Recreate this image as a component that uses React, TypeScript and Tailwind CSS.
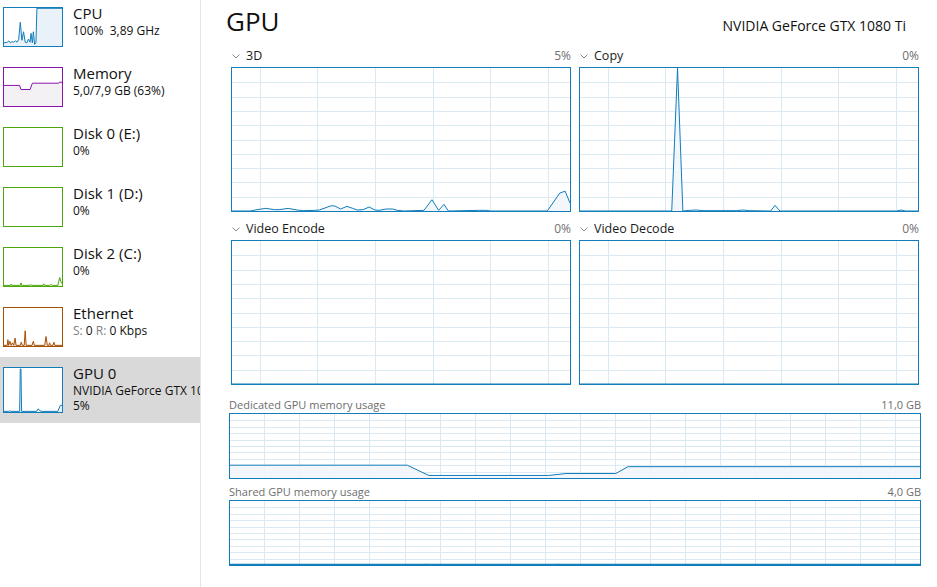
import React from "react";

type Pt = [number, number];

const BLUE = "#117dbb";
const GRID = "#d9eaf4";
const FILL = "#f1f6fa";

function areaPaths(pts: Pt[], w: number, h: number) {
  const xy = pts.map(([xf, vf]) => [xf * w, h - vf * h] as [number, number]);
  const line = xy.map((p, i) => `${i ? "L" : "M"}${p[0].toFixed(2)},${p[1].toFixed(2)}`).join(" ");
  const area = `${line} L${xy[xy.length - 1][0].toFixed(2)},${h} L${xy[0][0].toFixed(2)},${h} Z`;
  return { line, area };
}

function Chart({
  w,
  h,
  vx,
  rows,
  data,
  boxClass,
  thickBottom,
}: {
  w: number;
  h: number;
  vx: number[];
  rows: number;
  data: Pt[];
  boxClass: string;
  thickBottom?: boolean;
}) {
  const iw = w - 2;
  const ih = h - 2;
  const { line, area } = areaPaths(data, iw, ih);
  const hs: number[] = [];
  for (let k = 1; k < rows; k++) hs.push(Math.round((k * ih) / rows) + 0.5);
  return (
    <div className={boxClass}>
      <svg width={iw} height={ih} className="block">
        {vx.map((x, i) => (
          <line key={"v" + i} x1={x} x2={x} y1={0} y2={ih} stroke={GRID} strokeWidth={1} />
        ))}
        {hs.map((y, i) => (
          <line key={"h" + i} x1={0} x2={iw} y1={y} y2={y} stroke={GRID} strokeWidth={1} />
        ))}
        <path d={area} fill={FILL} fillOpacity={0.85} />
        <path d={line} fill="none" stroke={BLUE} strokeWidth={1} strokeLinejoin="round" />
        {thickBottom && <line x1={0} x2={iw} y1={ih - 0.5} y2={ih - 0.5} stroke={BLUE} strokeWidth={1.5} />}
      </svg>
    </div>
  );
}

function Thumb({
  data,
  color,
  fill,
  tall,
  boxClass,
}: {
  data: Pt[];
  color: string;
  fill: string;
  tall?: boolean;
  boxClass: string;
}) {
  const iw = 58;
  const ih = tall ? 44 : 38;
  const { line, area } = data.length ? areaPaths(data, iw, ih) : { line: "", area: "" };
  return (
    <div className={boxClass}>
      <svg width={iw} height={ih} className="block">
        {data.length > 0 && <path d={area} fill={fill} />}
        {data.length > 0 && <path d={line} fill="none" stroke={color} strokeWidth={1} strokeLinejoin="round" />}
      </svg>
    </div>
  );
}

const conv = (pts: number[][], x0: number, x1: number, y0: number, y1: number): Pt[] =>
  pts.map(([x, y]) => [(x - x0) / (x1 - x0), (y1 - y) / (y1 - y0)]);

const cpuData = conv(
  [
    [10, 130], [20, 128], [25, 124], [30, 130], [35, 126], [40, 128], [45, 124], [50, 128], [55, 120],
    [60, 65], [65, 122], [70, 95], [75, 128], [80, 130], [85, 118], [90, 128], [93, 100], [97, 130],
    [100, 95], [104, 135], [108, 130], [111, 21], [188, 21],
  ],
  10, 188, 20, 140
);
const memData = conv(
  [[10, 255], [58, 255], [62, 268], [90, 268], [97, 248], [178, 248], [180, 245], [188, 245]],
  10, 188, 200, 320
);
const disk2Data = conv(
  [
    [10, 138], [30, 138], [32, 134], [34, 138], [60, 138], [62, 130], [64, 138], [90, 138], [92, 135],
    [95, 138], [130, 138], [132, 133], [134, 138], [150, 138], [155, 135], [158, 138], [175, 138],
    [178, 125], [181, 113], [184, 125], [188, 132],
  ],
  10, 188, 20, 140
);
const ethData = conv(
  [
    [10, 318], [20, 318], [22, 300], [24, 318], [28, 305], [32, 318], [36, 310], [40, 318], [44, 295],
    [47, 318], [60, 318], [63, 308], [66, 318], [72, 318], [75, 272], [78, 318], [96, 318], [100, 305],
    [103, 318], [135, 318], [139, 290], [143, 318], [148, 318], [150, 310], [152, 318], [160, 318],
    [163, 308], [166, 318], [188, 318],
  ],
  10, 188, 200, 320
);
const gpuData = conv(
  [
    [10, 516], [25, 516], [28, 514], [31, 516], [58, 516], [60, 383], [62, 383], [64, 516], [110, 516],
    [115, 508], [120, 514], [125, 516], [175, 516], [183, 497], [188, 497],
  ],
  10, 188, 380, 518
);

const d3Data = conv(
  [
    [14, 454], [55, 454], [70, 450], [90, 446], [110, 450], [120, 450], [140, 446], [160, 451], [175, 453],
    [200, 452], [210, 451], [237, 438], [245, 439], [258, 448], [272, 440], [285, 446], [295, 451],
    [308, 450], [322, 442], [335, 451], [345, 452], [360, 448], [375, 448], [385, 452], [400, 454],
    [445, 452], [463, 420], [478, 452], [490, 434], [500, 454], [570, 452], [585, 452], [595, 454],
    [722, 454], [750, 400], [762, 394], [773, 430],
  ],
  14, 773, 22, 454
);
const copyData = conv(
  [
    [794, 454], [1000, 454], [1013, 22], [1025, 454], [1040, 452], [1055, 451], [1070, 453], [1145, 453],
    [1160, 451], [1175, 453], [1222, 454], [1232, 437], [1243, 454], [1505, 454], [1515, 451],
    [1525, 454], [1553, 454],
  ],
  794, 1553, 22, 454
);
const flat: Pt[] = [[0, 0], [1, 0]];

const dedData: Pt[] = [
  [0, 0.2], [0.257, 0.2], [0.288, 0.04], [0.462, 0.04], [0.487, 0.07], [0.559, 0.07], [0.577, 0.177], [1, 0.177],
];
const sharedData: Pt[] = [
  [0, 0], [0.27, 0], [0.285, 0.01], [0.3, 0], [0.46, 0], [0.475, 0.01], [0.49, 0], [1, 0],
];

const smallVx = [28.5, 85.5, 143.5, 201.5, 258.5, 316.5];
const memVx: number[] = [];
for (let k = 0; k < 19; k++) memVx.push(Math.round(34.3 + 35.05 * k) + 0.5);

function Chevron() {
  return (
    <svg width="8" height="5" viewBox="0 0 8 5" className="block">
      <polyline points="0.5,0.5 4,4 7.5,0.5" fill="none" stroke="#8a8a8a" strokeWidth="1" />
    </svg>
  );
}

function ChartLabel({ name, pct }: { name: string; pct: string }) {
  return (
    <div className="flex h-[18px] items-end justify-between text-[12.5px] leading-[16px]">
      <div className="flex h-[16px] items-center gap-[6px] pl-[1px]">
        <Chevron />
        <span className="text-[#1a1a1a]">{name}</span>
      </div>
      <span className="text-[12px] text-[#707070]">{pct}</span>
    </div>
  );
}

function SideItem({
  title,
  sub,
  thumb,
  selected,
}: {
  title: string;
  sub: React.ReactNode;
  thumb: React.ReactNode;
  selected?: boolean;
}) {
  return (
    <div className={selected ? "flex gap-[10px] bg-[#d9d9d9] pb-[10px] pl-[3px] pt-[6px]" : "flex gap-[10px] pb-[10px] pl-[3px] pt-[6px]"}>
      <div className="mt-[4px] shrink-0">{thumb}</div>
      <div className="min-w-0 overflow-hidden whitespace-nowrap">
        <div className="h-[20px] text-[15px] leading-[20px] text-[#111]">{title}</div>
        {sub}
      </div>
    </div>
  );
}

const subCls = "h-[15px] text-[12px] leading-[15px] text-[#111]";

export default function App() {
  return (
    <div className="flex h-[587px] w-[937px] overflow-hidden bg-white font-['Open_Sans','Noto_Sans',sans-serif]">
      <div className="w-[200px] shrink-0 overflow-hidden">
        <div className="-mt-[3px]">
          <SideItem
            title="CPU"
            sub={<div className={subCls}>100%&nbsp;&nbsp;3,89 GHz</div>}
            thumb={<Thumb data={cpuData} color={BLUE} fill="#eaf2f9" boxClass="h-[40px] w-[60px] border border-[#117dbb]" />}
          />
          <SideItem
            title="Memory"
            sub={<div className={subCls}>5,0/7,9 GB (63%)</div>}
            thumb={<Thumb data={memData} color="#8b12ae" fill="#f4f1f5" boxClass="h-[40px] w-[60px] border border-[#8b12ae]" />}
          />
          <SideItem
            title="Disk 0 (E:)"
            sub={<div className={subCls}>0%</div>}
            thumb={<Thumb data={[]} color="#4da60c" fill="#eff7e7" boxClass="h-[40px] w-[60px] border border-[#4da60c]" />}
          />
          <SideItem
            title="Disk 1 (D:)"
            sub={<div className={subCls}>0%</div>}
            thumb={<Thumb data={[]} color="#4da60c" fill="#eff7e7" boxClass="h-[40px] w-[60px] border border-[#4da60c]" />}
          />
          <SideItem
            title="Disk 2 (C:)"
            sub={<div className={subCls}>0%</div>}
            thumb={<Thumb data={disk2Data} color="#4da60c" fill="#eff7e7" boxClass="h-[40px] w-[60px] border border-[#4da60c]" />}
          />
          <SideItem
            title="Ethernet"
            sub={
              <div className={subCls}>
                <span className="text-[#808080]">S: </span>0 <span className="text-[#808080]">R: </span>0 Kbps
              </div>
            }
            thumb={<Thumb data={ethData} color="#a74f01" fill="#f6ede5" boxClass="h-[40px] w-[60px] border border-[#a74f01]" />}
          />
          <SideItem
            selected
            title="GPU 0"
            sub={
              <>
                <div className={subCls}>NVIDIA GeForce GTX 1080 Ti</div>
                <div className={subCls}>5%</div>
              </>
            }
            thumb={<Thumb tall data={gpuData} color={BLUE} fill="#eaf2f9" boxClass="h-[46px] w-[60px] border border-[#117dbb] bg-white" />}
          />
        </div>
      </div>
      <div className="w-[1px] shrink-0 bg-[#e3e3e3]" />
      <div className="flex w-[720px] flex-col pl-[28px] pt-[5px]">
        <div className="flex h-[32px] items-baseline justify-between pr-[15px]">
          <div className="-ml-[3px] text-[26px] leading-[32px] text-[#111]">GPU</div>
          <div className="text-[14px] leading-[20px] text-[#111]">NVIDIA GeForce GTX 1080 Ti</div>
        </div>
        <div className="mt-[9px] grid w-[690px] grid-cols-[340px_340px] gap-x-[8px] gap-y-[7px] pl-[2px]">
          <div className="flex flex-col gap-[3px]">
            <ChartLabel name="3D" pct="5%" />
            <Chart w={340} h={145} vx={smallVx} rows={10} data={d3Data} boxClass="h-[145px] w-[340px] border border-[#117dbb]" />
          </div>
          <div className="flex flex-col gap-[3px]">
            <ChartLabel name="Copy" pct="0%" />
            <Chart w={340} h={145} vx={smallVx} rows={10} data={copyData} boxClass="h-[145px] w-[340px] border border-[#117dbb]" />
          </div>
          <div className="flex flex-col gap-[3px]">
            <ChartLabel name="Video Encode" pct="0%" />
            <Chart w={340} h={145} vx={smallVx} rows={10} data={flat} boxClass="h-[145px] w-[340px] border border-[#117dbb]" />
          </div>
          <div className="flex flex-col gap-[3px]">
            <ChartLabel name="Video Decode" pct="0%" />
            <Chart w={340} h={145} vx={smallVx} rows={10} data={flat} boxClass="h-[145px] w-[340px] border border-[#117dbb]" />
          </div>
        </div>
        <div className="mt-[11px] flex w-[692px] flex-col">
          <div className="flex h-[16px] items-end justify-between text-[11px] leading-[15px] text-[#6e6e6e]">
            <span>Dedicated GPU memory usage</span>
            <span>11,0 GB</span>
          </div>
          <div className="mt-[1px]">
            <Chart w={692} h={66} vx={memVx} rows={10} data={dedData} boxClass="h-[66px] w-[692px] border border-[#117dbb]" />
          </div>
          <div className="mt-[4px] flex h-[16px] items-end justify-between text-[11px] leading-[15px] text-[#6e6e6e]">
            <span>Shared GPU memory usage</span>
            <span>4,0 GB</span>
          </div>
          <div className="mt-[1px]">
            <Chart w={692} h={66} vx={memVx} rows={10} data={sharedData} thickBottom boxClass="h-[66px] w-[692px] border border-[#117dbb]" />
          </div>
        </div>
      </div>
    </div>
  );
}
